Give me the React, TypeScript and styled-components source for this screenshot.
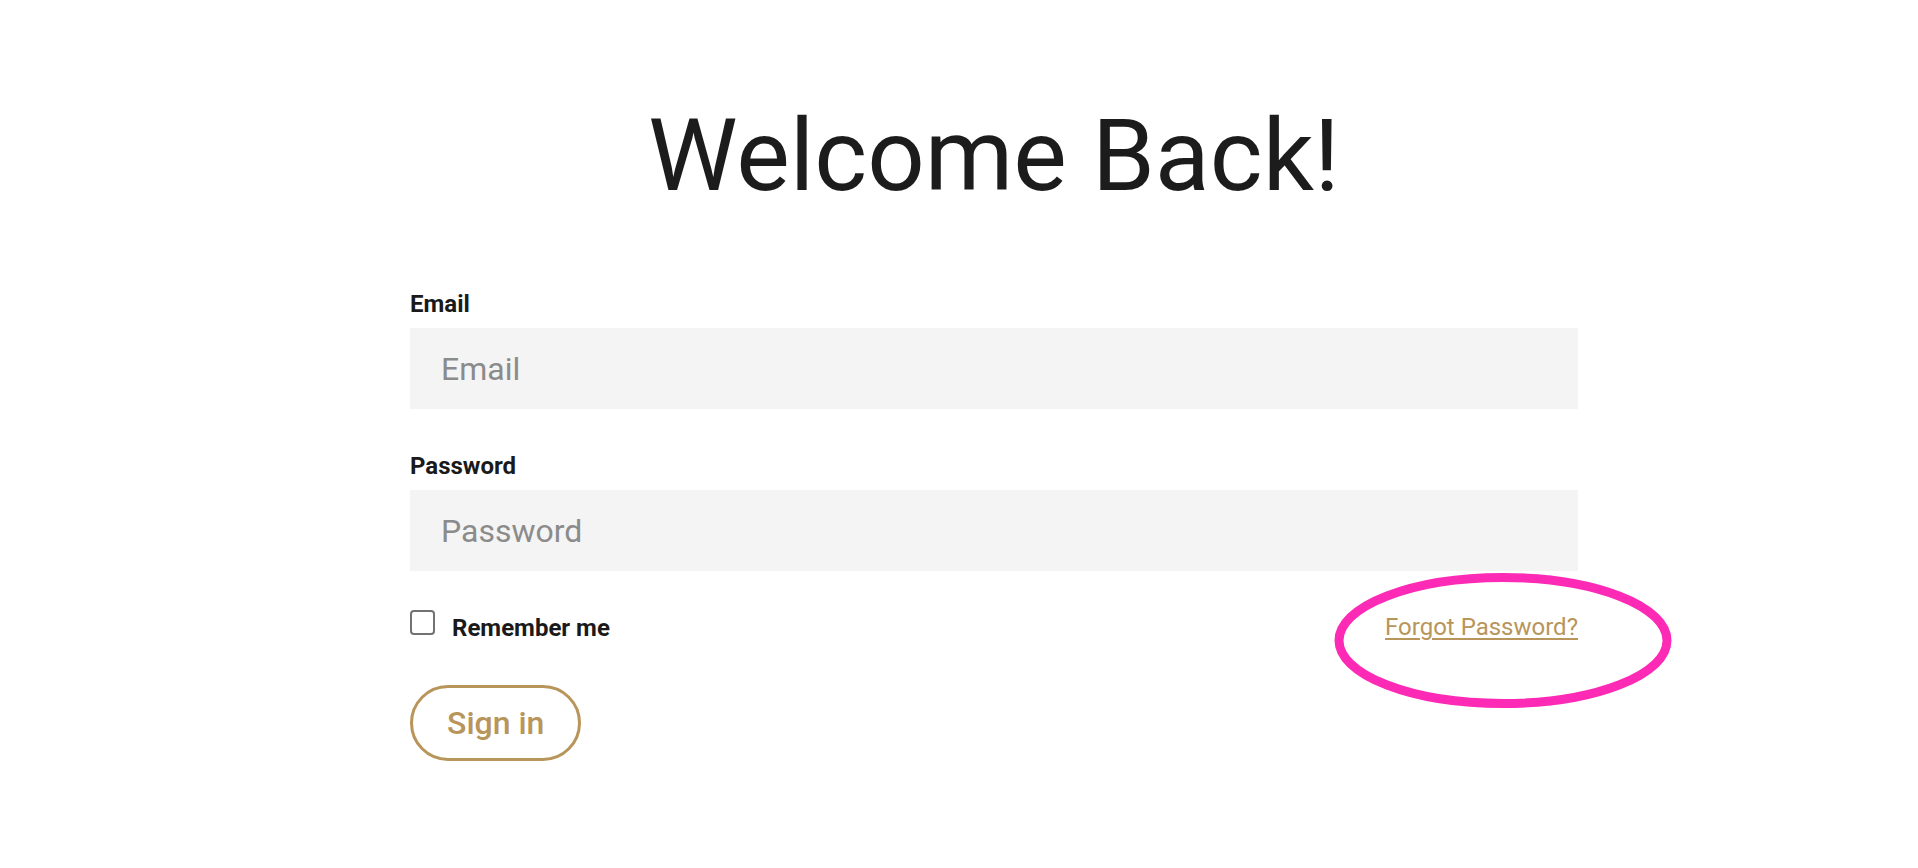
import styled, { createGlobalStyle } from 'styled-components';

const GlobalStyle = createGlobalStyle`
    html, body {
        margin: 0;
        padding: 0;
        background: #ffffff;
    }
    body {
        font-family: Roboto, 'Liberation Sans', Arial, sans-serif;
        color: #1b1b1b;
    }
    * {
        box-sizing: border-box;
    }
`;

const Page = styled.div`
    min-height: 868px;
    padding: 96px 0 0 70px;
`;

const Container = styled.div`
    width: 1168px;
    margin: 0 auto;
`;

const Title = styled.h1`
    margin: 0;
    text-align: center;
    font-size: 101px;
    line-height: 120px;
    font-weight: 400;
    color: #1c1c1c;
`;

const Form = styled.form`
    margin-top: 74px;
    display: flex;
    flex-direction: column;
`;

const Field = styled.div`
    display: flex;
    flex-direction: column;
    gap: 10px;
    margin-bottom: 43px;
`;

const Label = styled.label`
    font-size: 24px;
    line-height: 28px;
    font-weight: 700;
    color: #1a1a1a;
`;

const Input = styled.input`
    height: 81px;
    border: none;
    outline: none;
    background-color: #f4f4f4;
    padding: 0 31px;
    font-family: inherit;
    font-size: 32px;
    color: #333;

    &::placeholder {
        color: #8b8b8b;
    }
`;

const Row = styled.div`
    position: relative;
    display: flex;
    justify-content: space-between;
    align-items: center;
    margin-top: -4px;
`;

const Remember = styled.label`
    display: flex;
    align-items: center;
    gap: 17px;
    font-size: 24px;
    line-height: 28px;
    font-weight: 700;
    color: #1a1a1a;
`;

const Checkbox = styled.input`
    appearance: none;
    margin: 0 0 10px 0;
    width: 25px;
    height: 25px;
    border: 2px solid #727272;
    border-radius: 4px;
    background: #fff;
`;

const ForgotLink = styled.a`
    font-size: 24px;
    line-height: 29px;
    color: #b8955a;
    text-decoration: underline;
    text-underline-offset: 3px;
    text-decoration-thickness: 2px;
    cursor: pointer;
`;

const Highlight = styled.svg`
    position: absolute;
    right: -94px;
    top: -37px;
    width: 338px;
    height: 135px;
    pointer-events: none;
    overflow: visible;
`;

const SignInBTN = styled.button`
    align-self: flex-start;
    margin-top: 40px;
    padding: 16px 34px;
    border: 3.5px solid #b8955a;
    border-radius: 40px;
    background: transparent;
    color: #b8955a;
    font-family: inherit;
    font-size: 32px;
    line-height: 38px;
    font-weight: 500;
    cursor: pointer;
`;

function App() {
    return (
        <Page>
            <GlobalStyle />
            <Container>
                <Title>Welcome Back!</Title>
                <Form onSubmit={(e) => e.preventDefault()}>
                    <Field>
                        <Label htmlFor="email">Email</Label>
                        <Input id="email" type="email" placeholder="Email" />
                    </Field>
                    <Field>
                        <Label htmlFor="password">Password</Label>
                        <Input id="password" type="password" placeholder="Password" />
                    </Field>
                    <Row>
                        <Remember>
                            <Checkbox type="checkbox" />
                            Remember me
                        </Remember>
                        <ForgotLink>Forgot Password?</ForgotLink>
                        <Highlight viewBox="0 0 338 135">
                            <ellipse
                                cx="169"
                                cy="67.5"
                                rx="164"
                                ry="63"
                                fill="none"
                                stroke="#fd2ab6"
                                strokeWidth="9"
                            />
                        </Highlight>
                    </Row>
                    <SignInBTN type="submit">Sign in</SignInBTN>
                </Form>
            </Container>
        </Page>
    );
}

export default App;
